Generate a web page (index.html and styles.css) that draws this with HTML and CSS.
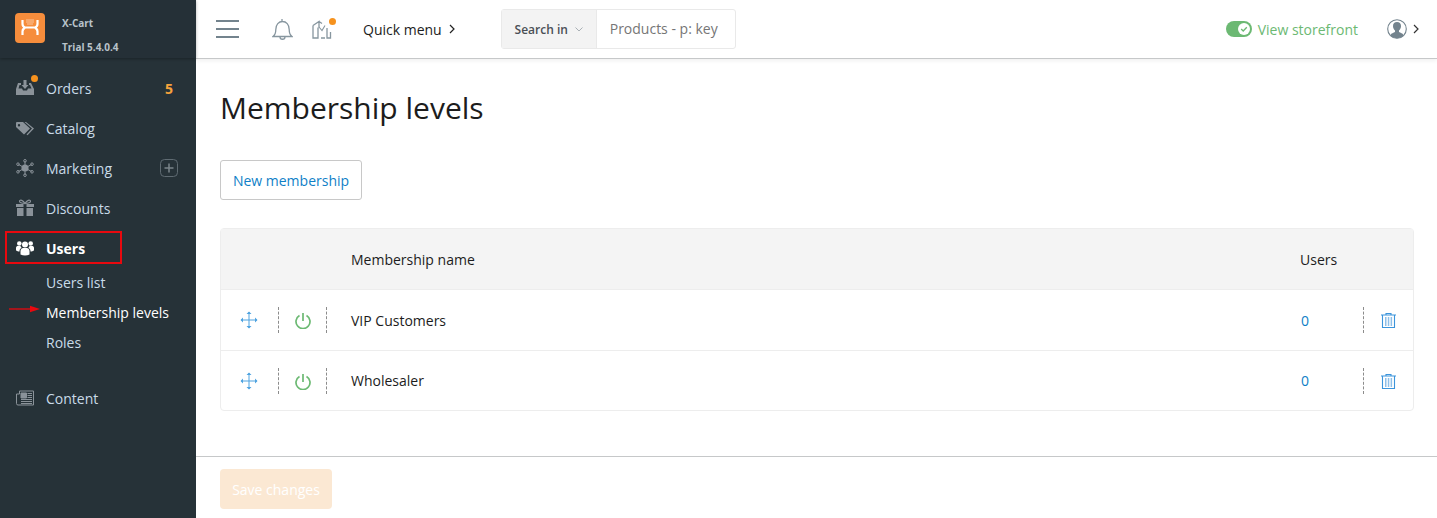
FILE: index.html
```html
<!DOCTYPE html>
<html lang="en">
<head>
  <meta charset="UTF-8">
  <meta name="viewport" content="width=device-width, initial-scale=1.0">
  <title>Membership levels</title>
  <link rel="stylesheet" href="styles.css">
</head>
<body>
  <aside class="sidebar">
    <div class="brand">
      <svg class="brand-logo" width="30" height="30" viewBox="0 0 30 30">
        <rect width="30" height="30" rx="4" fill="#f68d3c"/>
        <path d="M7.5 7v4c0 2 1 3 2.5 3.5h10c1.500-.5 2.500-1.500 2.500-3.500V7M10 14.500c-1.500 1-2.500 2-2.500 4v3.500M20 14.500c1.500 1 2.500 2 2.500 4v3.500" fill="none" stroke="#fff" stroke-width="2.200"/>
        <path d="M11.500 7h7M11.500 9h7M12.500 11h5" stroke="#fff" stroke-width="1" stroke-dasharray="1 1" fill="none"/>
      </svg>
      <div class="brand-text">
        <div>X-Cart</div>
        <div>Trial 5.4.0.4</div>
      </div>
    </div>
    <nav class="menu">
      <a class="menu-item">
        <span class="menu-icon has-dot">
          <svg width="18" height="18" viewBox="0 0 18 18"><path d="M0 10l2-6h3v2H3.500L2.500 9.500h3.500l1 2h4l1-2h3.500L14 6h-1V4h2l3 6v6H0zM7.500 1h3v5h2L9 10 5.500 6h2z" fill="#8a9299"/></svg>
        </span>
        <span class="menu-label">Orders</span>
        <span class="menu-count">5</span>
      </a>
      <a class="menu-item">
        <span class="menu-icon">
          <svg width="18" height="18" viewBox="0 0 18 18"><path d="M0 3.500V8l8 7.500 6-6L7 3H1zM3 5a1.200 1.200 0 1 1 0 2.400A1.200 1.200 0 0 1 3 5zM8.500 3l7.500 6.500L10.500 15.500l1 .8L18 9.500 10 3z" fill="#8a9299"/></svg>
        </span>
        <span class="menu-label">Catalog</span>
      </a>
      <a class="menu-item">
        <span class="menu-icon">
          <svg width="18" height="18" viewBox="0 0 18 18"><g stroke="#8a9299" fill="none"><path d="M9 9L9 2M9 9L9 16M9 9L2.500 5.500M9 9L15.500 5.500M9 9L2.500 12.500M9 9L15.500 12.500"/><circle cx="9" cy="1.800" r="1.300"/><circle cx="9" cy="16.200" r="1.300"/><circle cx="2" cy="5.200" r="1.300"/><circle cx="16" cy="5.200" r="1.300"/><circle cx="2" cy="12.800" r="1.300"/><circle cx="16" cy="12.800" r="1.300"/></g><circle cx="9" cy="9" r="3.600" fill="#8a9299"/></svg>
        </span>
        <span class="menu-label">Marketing</span>
        <span class="menu-plus">
          <svg width="18" height="18" viewBox="0 0 18 18"><rect x=".5" y=".5" width="17" height="17" rx="4" fill="none" stroke="#5f6b72"/><path d="M9 4.500v9M4.500 9h9" stroke="#7b858b" stroke-width="1.500"/></svg>
        </span>
      </a>
      <a class="menu-item">
        <span class="menu-icon">
          <svg width="18" height="18" viewBox="0 0 18 18"><path d="M0 5h7.500v3H0zM10.500 5H18v3h-7.500zM1 9h6.500v8H1zM10.500 9H17v8h-6.500z" fill="#8a9299"/><path d="M9 4.500C7 1 4 .5 3.500 2S6 4.500 9 4.500C12 4.500 15 3.500 14.500 2S11 1 9 4.500z" fill="none" stroke="#8a9299" stroke-width="1.200"/></svg>
        </span>
        <span class="menu-label">Discounts</span>
      </a>
      <a class="menu-item is-open">
        <span class="menu-icon">
          <svg width="18" height="16" viewBox="0 0 18 16"><g fill="#fff"><circle cx="9" cy="4.500" r="3"/><circle cx="3.300" cy="3.500" r="2.300"/><circle cx="14.700" cy="3.500" r="2.300"/><path d="M4.500 14.500V11c0-2 1.500-3 2.500-3h4c1 0 2.500 1 2.500 3v3.500c-2.500 1.200-6.500 1.200-9 0z"/><path d="M0 10.500V8c0-1.500 1-2 2-2h2.500c.3 1 .8 1.500 1.200 1.800C4 8.500 3.500 9.800 3.500 11.500 2 11.500 1 11 0 10.500zM18 10.500V8c0-1.500-1-2-2-2h-2.500c-.3 1-.8 1.500-1.200 1.800 1.700.7 2.200 2 2.200 3.700 1.500 0 2.500-.5 3.500-1z"/></g></svg>
        </span>
        <span class="menu-label">Users</span>
      </a>
      <a class="submenu-item">Users list</a>
      <a class="submenu-item is-current">Membership levels</a>
      <a class="submenu-item submenu-last">Roles</a>
      <a class="menu-item">
        <span class="menu-icon">
          <svg width="18" height="18" viewBox="0 0 18 18"><path d="M3.500 2h14v14H2a1.500 1.500 0 0 1-1.500-1.500V5H3.500z" fill="none" stroke="#8a9299"/><path d="M5 4h5.500v5H5zM11.500 4.500H16M11.500 6.500H16M11.500 8.500H16M5 10.500H16M5 12.500H16M5 14.500H16" fill="#8a9299" stroke="#8a9299"/></svg>
        </span>
        <span class="menu-label">Content</span>
      </a>
    </nav>

    <!-- red annotations from the screenshot -->
    <div class="mark-box"></div>
    <svg class="mark-arrow" width="32" height="8" viewBox="0 0 32 8"><path d="M0 4h22" stroke="#e8090f" stroke-width="1.300"/><path d="M21 .8L31 4 21 7.200z" fill="#e8090f"/></svg>
  </aside>

  <div class="main">
    <header class="topbar">
      <svg class="burger" width="23" height="18" viewBox="0 0 23 18"><path d="M0 1h23M0 9h23M0 17h23" stroke="#73838d" stroke-width="2"/></svg>
      <svg class="bell" width="21" height="23" viewBox="0 0 21 23"><path d="M1 18.500c2-1.500 2.800-3 2.800-7 0-5 3-8 6.700-8s6.700 3 6.700 8c0 4 .8 5.500 2.800 7zM10 3.500V1M8 19c0 3 5 3 5 0" fill="none" stroke="#87969f" stroke-width="1.300"/></svg>
      <span class="tour has-dot">
        <svg width="21" height="21" viewBox="0 0 21 21"><path d="M1 6.500L7 2.500v6M1 6.500V19h5V8.500M7 2.500l3 2M9 19h4M15 9v10h3.500V13" fill="none" stroke="#87969f" stroke-width="1.300"/><path d="M7 8l3 3.500 3-5" fill="none" stroke="#87969f" stroke-width="1.100"/></svg>
      </span>
      <a class="quick-menu">Quick menu
        <svg width="6" height="10" viewBox="0 0 6 10"><path d="M1 1l4 4-4 4" fill="none" stroke="#222" stroke-width="1.200"/></svg>
      </a>
      <div class="search">
        <div class="search-in">Search in
          <svg width="8" height="5" viewBox="0 0 8 5"><path d="M.5.500L4 4 7.500.5" fill="none" stroke="#a9b0b5"/></svg>
        </div>
        <div class="search-field">Products - p: key</div>
      </div>
      <div class="topbar-right">
        <a class="storefront">
          <svg width="26" height="16" viewBox="0 0 26 16"><rect width="26" height="16" rx="8" fill="#6cb973"/><circle cx="18" cy="8" r="6" fill="#fff"/><path d="M15.200 8l2 2 3.600-3.800" fill="none" stroke="#6cb973" stroke-width="1.300"/></svg>
          View storefront
        </a>
        <a class="account">
          <svg width="20" height="20" viewBox="0 0 20 20"><circle cx="10" cy="10" r="9.300" fill="#fff" stroke="#73838d" stroke-width="1.100"/><path d="M3.500 16.500c.5-2.500 3-2.500 4.500-3.500v-1.500C6.500 10 6 8.500 6 7c0-2.500 1.500-4 4-4s4 1.500 4 4c0 1.500-.5 3-2 4.500V13c1.500 1 4 1 4.500 3.500C13 20 7 20 3.500 16.500z" fill="#73838d"/></svg>
          <svg width="6" height="10" viewBox="0 0 6 10"><path d="M1 1l4 4-4 4" fill="none" stroke="#333" stroke-width="1.200"/></svg>
        </a>
      </div>
    </header>

    <main class="content">
      <h1>Membership levels</h1>
      <button class="btn-new" type="button">New membership</button>

      <div class="levels">
        <div class="levels-head">
          <div class="col-name">Membership name</div>
          <div class="col-users">Users</div>
        </div>
        <div class="levels-row">
          <span class="cell-move">
            <svg width="18" height="18" viewBox="0 0 18 18"><path d="M9 1v16M1 9h16" stroke="#4fa3e0" stroke-width="1"/><path d="M9 .5L11.500 3h-5zM9 17.500L6.500 15h5zM.5 9L3 6.500v5zM17.500 9L15 11.500v-5z" fill="#4fa3e0"/></svg>
          </span>
          <span class="cell-power">
            <svg width="16" height="17" viewBox="0 0 16 17"><path d="M8 1v8" stroke="#6cb973" stroke-width="1.700"/><path d="M4.500 3.500a7 7 0 1 0 7 0" fill="none" stroke="#6cb973" stroke-width="1.700"/></svg>
          </span>
          <span class="cell-name">VIP Customers</span>
          <a class="cell-users">0</a>
          <span class="cell-trash">
            <svg width="15" height="15" viewBox="0 0 15 15"><path d="M0 2h15M5 2V.5h5V2M1.500 2.500v12h12v-12" fill="none" stroke="#3b94db" stroke-width="1.100"/><path d="M4 4h1.500v9H4zM6.800 4h1.500v9H6.800zM9.600 4h1.500v9H9.600z" fill="#8fc0e8"/></svg>
          </span>
        </div>
        <div class="levels-row">
          <span class="cell-move">
            <svg width="18" height="18" viewBox="0 0 18 18"><path d="M9 1v16M1 9h16" stroke="#4fa3e0" stroke-width="1"/><path d="M9 .5L11.500 3h-5zM9 17.500L6.500 15h5zM.5 9L3 6.500v5zM17.500 9L15 11.500v-5z" fill="#4fa3e0"/></svg>
          </span>
          <span class="cell-power">
            <svg width="16" height="17" viewBox="0 0 16 17"><path d="M8 1v8" stroke="#6cb973" stroke-width="1.700"/><path d="M4.500 3.500a7 7 0 1 0 7 0" fill="none" stroke="#6cb973" stroke-width="1.700"/></svg>
          </span>
          <span class="cell-name">Wholesaler</span>
          <a class="cell-users">0</a>
          <span class="cell-trash">
            <svg width="15" height="15" viewBox="0 0 15 15"><path d="M0 2h15M5 2V.5h5V2M1.500 2.500v12h12v-12" fill="none" stroke="#3b94db" stroke-width="1.100"/><path d="M4 4h1.500v9H4zM6.800 4h1.500v9H6.800zM9.600 4h1.500v9H9.600z" fill="#8fc0e8"/></svg>
          </span>
        </div>
      </div>
    </main>

    <footer class="footer">
      <button class="btn-save" type="button" disabled>Save changes</button>
    </footer>
  </div>
</body>
</html>
```

FILE: styles.css
```css
/* X-Cart admin, membership levels page */
* {
  box-sizing: border-box;
}
html, body {
  height: 100%;
}
body {
  margin: 0;
  display: flex;
  height: 518px;
  overflow: hidden;
  background: #fff;
  color: #1c1c1c;
  font-family: "Open Sans", Arial, sans-serif;
  font-size: 14px;
}
a {
  text-decoration: none;
}
svg {
  display: block;
}

/* Sidebar */
.sidebar {
  position: relative;
  width: 196px;
  flex: none;
  background: #263238;
  color: #c9dbe8;
}
.brand {
  height: 58px;
  padding: 13px 0 0 15px;
  display: flex;
  background: #253037;
  box-shadow: 0 1px 3px rgba(0, 0, 0, 0.3);
}
.brand-text {
  margin: -2px 0 0 17px;
  color: #b9c3ca;
  font-size: 10px;
  font-weight: 700;
  line-height: 24px;
}
.menu {
  padding-top: 10px;
}
.menu-item {
  height: 40px;
  padding: 0 18px 0 16px;
  display: flex;
  align-items: center;
}
.menu-icon {
  position: relative;
  width: 18px;
  margin-right: 12px;
}
.menu-label {
  flex: 1;
}
.menu-count {
  padding-right: 5px;
  color: #f6a33c;
  font-weight: 700;
}
.has-dot::after {
  content: "";
  position: absolute;
  top: -4px;
  right: -4px;
  width: 7px;
  height: 7px;
  border-radius: 50%;
  background: #f6921e;
}
.is-open {
  color: #fff;
  font-weight: 700;
}
.submenu-item {
  display: block;
  height: 30px;
  padding-left: 46px;
  line-height: 30px;
}
.is-current {
  color: #fff;
}
.submenu-last {
  height: 40px;
  margin-bottom: 10px;
  line-height: 30px;
}
.mark-box {
  position: absolute;
  left: 5px;
  top: 231px;
  width: 117px;
  height: 33px;
  border: 2px solid #e8090f;
}
.mark-arrow {
  position: absolute;
  left: 9px;
  top: 305px;
}

/* Top bar */
.main {
  flex: 1;
  min-width: 0;
  display: flex;
  flex-direction: column;
}
.topbar {
  height: 59px;
  flex: none;
  padding-left: 20px;
  display: flex;
  align-items: center;
  border-bottom: 1px solid #c6c8c9;
  box-shadow: 0 2px 4px rgba(0, 0, 0, 0.06);
}
.bell {
  margin-left: 33px;
}
.tour {
  position: relative;
  margin-left: 19px;
}
.tour.has-dot::after {
  top: -1px;
  right: -3px;
}
.quick-menu {
  margin-left: 30px;
  display: flex;
  align-items: center;
  gap: 7px;
  color: #1c1c1c;
}
.search {
  width: 235px;
  height: 40px;
  margin-left: 46px;
  display: flex;
  border: 1px solid #e9e9e9;
  border-radius: 3px;
}
.search-in {
  width: 95px;
  display: flex;
  align-items: center;
  justify-content: center;
  gap: 7px;
  background: #f3f3f3;
  border-right: 1px solid #e9e9e9;
  color: #4a4f55;
  font-size: 12px;
  font-weight: 600;
}
.search-field {
  padding-left: 13px;
  line-height: 38px;
  color: #767676;
}
.topbar-right {
  margin-left: auto;
  padding-right: 18px;
  display: flex;
  align-items: center;
}
.storefront {
  display: flex;
  align-items: center;
  gap: 6px;
  color: #6cb973;
}
.account {
  margin-left: 29px;
  display: flex;
  align-items: center;
  gap: 6px;
}

/* Content */
.content {
  flex: 1;
  padding: 0 23px 0 24px;
  border-bottom: 1px solid #c6c8c9;
}
h1 {
  margin: 28px 0 32px;
  font-size: 30px;
  font-weight: 400;
  line-height: 41px;
}
.btn-new {
  display: block;
  width: 142px;
  height: 40px;
  padding: 0;
  background: #fff;
  border: 1px solid #c8c8c8;
  border-radius: 3px;
  color: #0f7fc7;
  font: inherit;
}
.levels {
  margin-top: 28px;
  border: 1px solid #ededed;
  border-radius: 4px;
}
.levels-head {
  height: 61px;
  display: flex;
  align-items: center;
  background: #f4f4f4;
  border-bottom: 1px solid #ededed;
}
.col-name {
  flex: 1;
  padding-left: 130px;
}
.col-users {
  width: 113px;
}
.levels-row {
  height: 60px;
  display: flex;
  align-items: center;
}
.levels-row + .levels-row {
  border-top: 1px solid #ededed;
}
.levels-row:last-child {
  height: 60px;
}
.cell-move {
  width: 57px;
  padding-left: 19px;
}
.cell-power {
  width: 49px;
  height: 26px;
  padding: 5px 0 0 16px;
  border-left: 1px dashed #8c8c8c;
  border-right: 1px dashed #8c8c8c;
}
.cell-name {
  flex: 1;
  padding-left: 24px;
}
.cell-users {
  width: 62px;
  color: #0f7fc7;
}
.cell-trash {
  width: 50px;
  height: 26px;
  padding: 6px 0 0 17px;
  border-left: 1px dashed #8c8c8c;
}

/* Footer */
.footer {
  height: 61px;
  flex: none;
  padding: 12px 24px 0;
}
.btn-save {
  width: 112px;
  height: 40px;
  padding: 0;
  background: #fbe8d3;
  border: 0;
  border-radius: 4px;
  color: #fff;
  font: inherit;
}
```
